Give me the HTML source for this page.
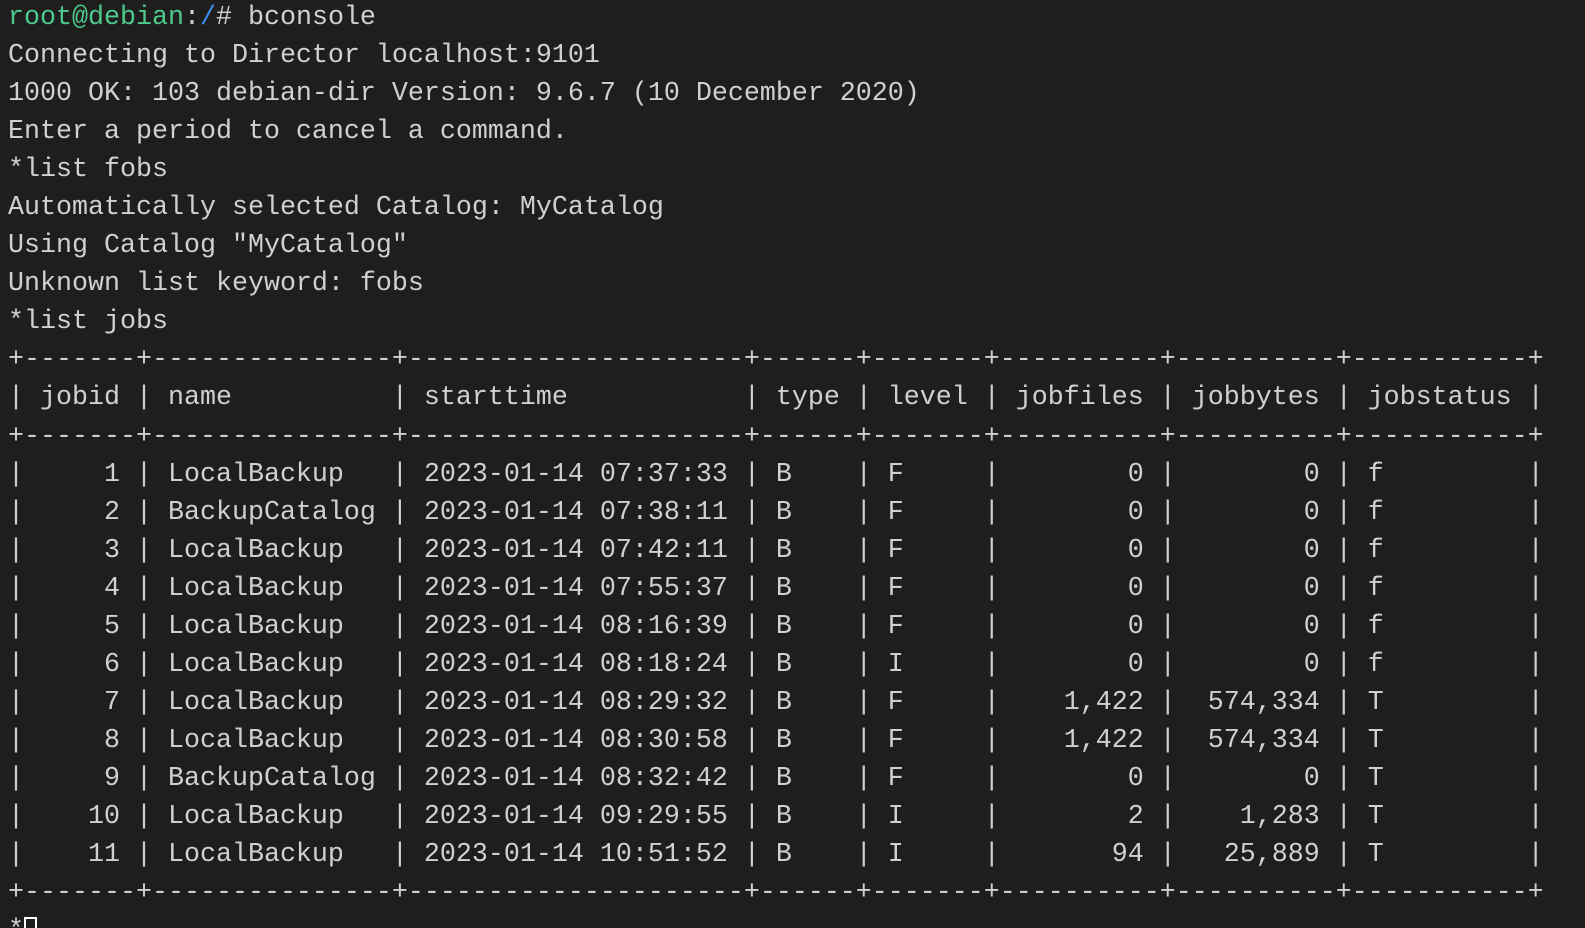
<!DOCTYPE html>
<html><head><meta charset="utf-8"><style>
html,body{margin:0;padding:0;background:#1e1e1e;width:1585px;height:928px;overflow:hidden}
.wrap{position:absolute;left:0;top:0;width:1585px;height:928px;overflow:hidden}
.t{position:absolute;left:8px;top:-1px;font-family:"Liberation Mono","DejaVu Sans Mono",monospace;font-size:26.67px;color:#d0d0d0;white-space:normal}
.t div{height:38.05px;line-height:38.05px;overflow:visible;white-space:pre}
.g{color:#4ec98b}.b{color:#3b8eea}
.cur{display:inline-block;width:13px;height:26px;border:2px solid #fff;box-sizing:border-box;vertical-align:-6px}
</style></head><body><div class="wrap"><div class="t">
<div><span class="g">root@debian</span>:<span class="b">/</span># bconsole</div>
<div>Connecting to Director localhost:9101</div>
<div>1000 OK: 103 debian-dir Version: 9.6.7 (10 December 2020)</div>
<div>Enter a period to cancel a command.</div>
<div>*list fobs</div>
<div>Automatically selected Catalog: MyCatalog</div>
<div>Using Catalog "MyCatalog"</div>
<div>Unknown list keyword: fobs</div>
<div>*list jobs</div>
<div>+-------+---------------+---------------------+------+-------+----------+----------+-----------+</div>
<div>| jobid | name          | starttime           | type | level | jobfiles | jobbytes | jobstatus |</div>
<div>+-------+---------------+---------------------+------+-------+----------+----------+-----------+</div>
<div>|     1 | LocalBackup   | 2023-01-14 07:37:33 | B    | F     |        0 |        0 | f         |</div>
<div>|     2 | BackupCatalog | 2023-01-14 07:38:11 | B    | F     |        0 |        0 | f         |</div>
<div>|     3 | LocalBackup   | 2023-01-14 07:42:11 | B    | F     |        0 |        0 | f         |</div>
<div>|     4 | LocalBackup   | 2023-01-14 07:55:37 | B    | F     |        0 |        0 | f         |</div>
<div>|     5 | LocalBackup   | 2023-01-14 08:16:39 | B    | F     |        0 |        0 | f         |</div>
<div>|     6 | LocalBackup   | 2023-01-14 08:18:24 | B    | I     |        0 |        0 | f         |</div>
<div>|     7 | LocalBackup   | 2023-01-14 08:29:32 | B    | F     |    1,422 |  574,334 | T         |</div>
<div>|     8 | LocalBackup   | 2023-01-14 08:30:58 | B    | F     |    1,422 |  574,334 | T         |</div>
<div>|     9 | BackupCatalog | 2023-01-14 08:32:42 | B    | F     |        0 |        0 | T         |</div>
<div>|    10 | LocalBackup   | 2023-01-14 09:29:55 | B    | I     |        2 |    1,283 | T         |</div>
<div>|    11 | LocalBackup   | 2023-01-14 10:51:52 | B    | I     |       94 |   25,889 | T         |</div>
<div>+-------+---------------+---------------------+------+-------+----------+----------+-----------+</div>
<div>*<span class="cur"></span></div>
</div></div></body></html>
